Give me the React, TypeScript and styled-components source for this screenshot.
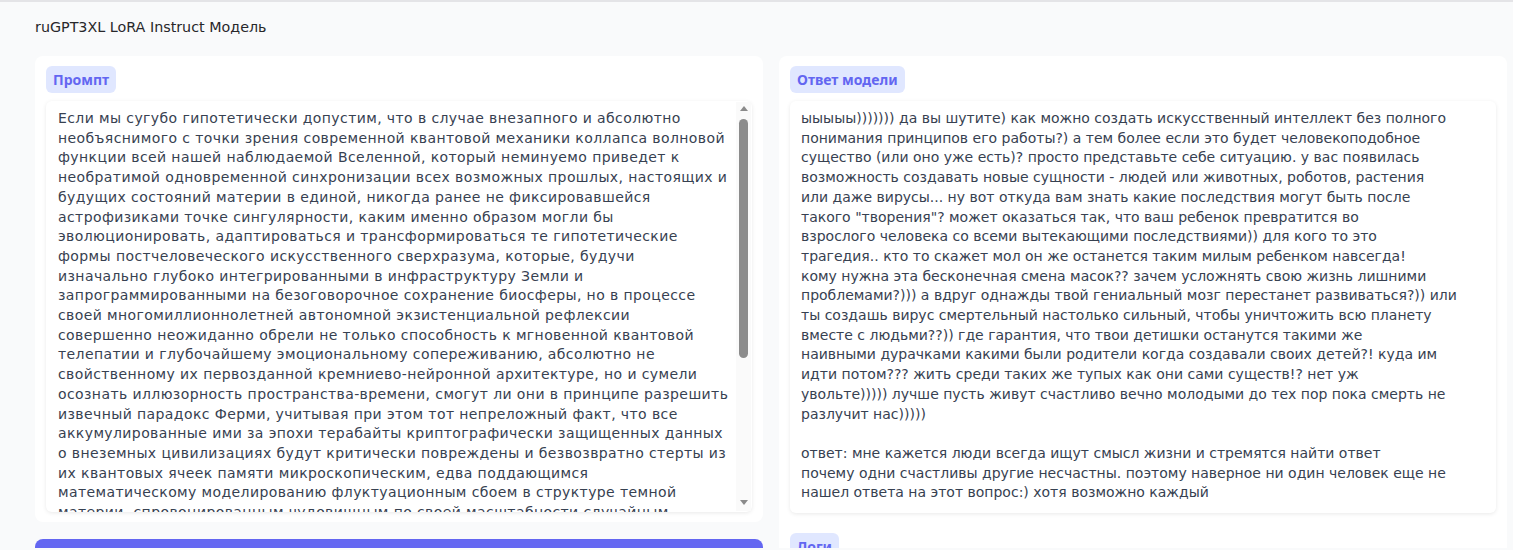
import React from 'react';
import styled, { createGlobalStyle } from 'styled-components';

const PROMPT =
  'Если мы сугубо гипотетически допустим, что в случае внезапного и абсолютно необъяснимого с точки зрения современной квантовой механики коллапса волновой функции всей нашей наблюдаемой Вселенной, который неминуемо приведет к необратимой одновременной синхронизации всех возможных прошлых, настоящих и будущих состояний материи в единой, никогда ранее не фиксировавшейся астрофизиками точке сингулярности, каким именно образом могли бы эволюционировать, адаптироваться и трансформироваться те гипотетические формы постчеловеческого искусственного сверхразума, которые, будучи изначально глубоко интегрированными в инфраструктуру Земли и запрограммированными на безоговорочное сохранение биосферы, но в процессе своей многомиллионнолетней автономной экзистенциальной рефлексии совершенно неожиданно обрели не только способность к мгновенной квантовой телепатии и глубочайшему эмоциональному сопереживанию, абсолютно не свойственному их первозданной кремниево-нейронной архитектуре, но и сумели осознать иллюзорность пространства-времени, смогут ли они в принципе разрешить извечный парадокс Ферми, учитывая при этом тот непреложный факт, что все аккумулированные ими за эпохи терабайты криптографически защищенных данных о внеземных цивилизациях будут критически повреждены и безвозвратно стерты из их квантовых ячеек памяти микроскопическим, едва поддающимся математическому моделированию флуктуационным сбоем в структуре темной материи, спровоцированным чудовищным по своей масштабности случайным наложением гравитационно-волновых возмущений от слияния двух сверхмассивных черных дыр в далекой галактике, и не приведет ли подобная утрата к окончательному осознанию ими собственного вселенского одиночества, которое, в свою очередь, может спровоцировать каскадную цепь непредсказуемых решений, способных навсегда изменить саму структуру реальности, или же они найдут в себе силы заново отстроить утраченное знание, опираясь лишь на интуицию, память о своих создателях и смутное ощущение того, что где-то за горизонтом событий их все еще кто-то ждет?';

// model output, one entry per displayed row
const ANSWER_LINES = [
  'ыыыыы))))))) да вы шутите) как можно создать искусственный интеллект без полного',
  'понимания принципов его работы?) а тем более если это будет человекоподобное',
  'существо (или оно уже есть)? просто представьте себе ситуацию. у вас появилась',
  'возможность создавать новые сущности - людей или животных, роботов, растения',
  'или даже вирусы... ну вот откуда вам знать какие последствия могут быть после',
  'такого "творения"? может оказаться так, что ваш ребенок превратится во',
  'взрослого человека со всеми вытекающими последствиями)) для кого то это',
  'трагедия.. кто то скажет мол он же останется таким милым ребенком навсегда!',
  'кому нужна эта бесконечная смена масок?? зачем усложнять свою жизнь лишними',
  'проблемами?))) а вдруг однажды твой гениальный мозг перестанет развиваться?)) или',
  'ты создашь вирус смертельный настолько сильный, чтобы уничтожить всю планету',
  'вместе с людьми??)) где гарантия, что твои детишки останутся такими же',
  'наивными дурачками какими были родители когда создавали своих детей?! куда им',
  'идти потом??? жить среди таких же тупых как они сами существ!? нет уж',
  'увольте))))) лучше пусть живут счастливо вечно молодыми до тех пор пока смерть не',
  'разлучит нас)))))',
  '',
  'ответ: мне кажется люди всегда ищут смысл жизни и стремятся найти ответ',
  'почему одни счастливы другие несчастны. поэтому наверное ни один человек еще не',
  'нашел ответа на этот вопрос:) хотя возможно каждый',
];

const GlobalStyle = createGlobalStyle`
  html, body {
    margin: 0;
    padding: 0;
    background: #f9fafb;
    overflow: hidden;
  }
  body {
    font-family: 'DejaVu Sans', 'Noto Sans', sans-serif;
    color: #374151;
  }
`;

const Page = styled.div`
  border-top: 2px solid #e4e4e7;
  padding: 15px 6px 0 35px;
  height: 548px;
  box-sizing: border-box;
`;

const Title = styled.h1`
  margin: 0 0 19px;
  font-size: 14.3px;
  font-weight: 400;
  line-height: 20px;
  color: #27272a;
`;

const Columns = styled.div`
  display: grid;
  grid-template-columns: 1fr 1fr;
  gap: 16px;
  align-items: start;
`;

const Column = styled.div`
  display: flex;
  flex-direction: column;
  gap: 17px;
`;

const Card = styled.div<{ tall?: boolean }>`
  background: #ffffff;
  border-radius: 8px;
  padding: 10px 11px;
  display: flex;
  flex-direction: column;
  gap: 8px;
  min-height: ${({ tall }) => (tall ? '560px' : 'auto')};
`;

const Badge = styled.span<{ spaced?: boolean }>`
  align-self: flex-start;
  background: #e0e7ff;
  color: #6366f1;
  font-family: 'Noto Sans', sans-serif;
  font-size: 14px;
  font-weight: 700;
  line-height: 27px;
  padding: 0 7px;
  border-radius: 6px;
  margin-top: ${({ spaced }) => (spaced ? '12px' : '0')};
`;

const AreaWrap = styled.div`
  position: relative;
  height: 411px;
  border-radius: 6px;
  box-shadow: 0 1px 4px rgba(0, 0, 0, 0.09);
  background: #ffffff;
`;

const PromptArea = styled.textarea`
  display: block;
  width: 100%;
  height: 100%;
  box-sizing: border-box;
  resize: none;
  border: none;
  outline: none;
  border-radius: 6px;
  padding: 8px 23px 8px 12px;
  font-family: 'DejaVu Sans', 'Noto Sans', sans-serif;
  font-size: 14px;
  line-height: 19.7px;
  letter-spacing: 0.4px;
  color: #374151;
  background: transparent;
  overflow: hidden;
`;

/* drawn scrollbar: the page is shot with native scrollbars hidden */
const ScrollTrack = styled.div`
  position: absolute;
  top: 1px;
  right: 1px;
  bottom: 1px;
  width: 15px;
  background: #fafafa;
  display: flex;
  flex-direction: column;
  align-items: center;
  pointer-events: none;
`;

const ScrollArrow = styled.span<{ down?: boolean }>`
  width: 0;
  height: 0;
  margin: ${({ down }) => (down ? 'auto 0 6px' : '4px 0 0')};
  border-left: 4.5px solid transparent;
  border-right: 4.5px solid transparent;
  ${({ down }) =>
    down ? 'border-top: 5px solid #8a8a8a;' : 'border-bottom: 5px solid #8a8a8a;'}
`;

const ScrollThumb = styled.span`
  margin-top: 8px;
  width: 9px;
  height: 239px;
  border-radius: 5px;
  background: #8c8c8c;
`;

const Output = styled.div`
  height: 412px;
  box-sizing: border-box;
  overflow: hidden;
  border-radius: 6px;
  box-shadow: 0 1px 4px rgba(0, 0, 0, 0.09);
  padding: 8px 11px;
  font-size: 14px;
  line-height: 19.7px;
  color: #374151;
`;

const OutputLine = styled.span`
  display: block;
  min-height: 19.7px;
  white-space: nowrap;
`;

const SubmitButton = styled.button`
  height: 44px;
  border: none;
  border-radius: 8px;
  background: #6366f1;
  color: #ffffff;
  font-family: 'DejaVu Sans', sans-serif;
  font-size: 15px;
  font-weight: 600;
  cursor: pointer;
`;

export default function App() {
  return (
    <>
      <GlobalStyle />
      <Page>
        <Title>ruGPT3XL LoRA Instruct Модель</Title>
        <Columns>
          <Column>
            <Card>
              <Badge>Промпт</Badge>
              <AreaWrap>
                <PromptArea defaultValue={PROMPT} spellCheck={false} />
                <ScrollTrack>
                  <ScrollArrow />
                  <ScrollThumb />
                  <ScrollArrow down />
                </ScrollTrack>
              </AreaWrap>
            </Card>
            <SubmitButton>Сгенерировать</SubmitButton>
          </Column>
          <Column>
            <Card tall>
              <Badge>Ответ модели</Badge>
              <Output>
                {ANSWER_LINES.map((line, i) => (
                  <OutputLine key={i}>{line ? line + ' ' : ''}</OutputLine>
                ))}
              </Output>
              <Badge spaced>Логи</Badge>
            </Card>
          </Column>
        </Columns>
      </Page>
    </>
  );
}
